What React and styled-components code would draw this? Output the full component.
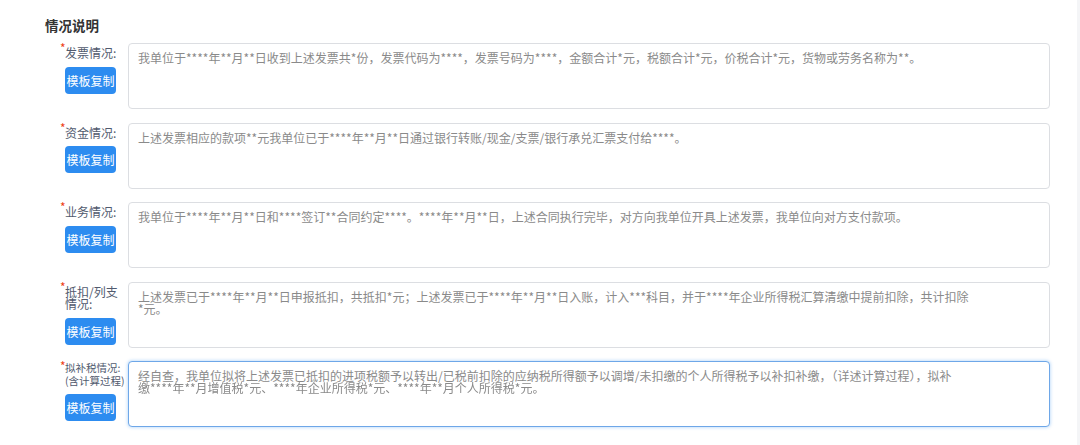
import React from 'react';
import styled, { createGlobalStyle, css } from 'styled-components';

const GlobalStyle = createGlobalStyle`
  html, body {
    margin: 0;
    padding: 0;
    background: #f4f5f7;
    font-family: "Noto Sans CJK SC", "Noto Sans", sans-serif;
  }
`;

const rows = [
  {
    label: ['发票情况:'],
    text:
      '我单位于****年**月**日收到上述发票共*份，发票代码为****，发票号码为****，金额合计*元，税额合计*元，价税合计*元，货物或劳务名称为**。'
  },
  {
    label: ['资金情况:'],
    text: '上述发票相应的款项**元我单位已于****年**月**日通过银行转账/现金/支票/银行承兑汇票支付给****。'
  },
  {
    label: ['业务情况:'],
    text:
      '我单位于****年**月**日和****签订**合同约定****。****年**月**日，上述合同执行完毕，对方向我单位开具上述发票，我单位向对方支付款项。'
  },
  {
    label: ['抵扣/列支', '情况:'],
    text:
      '上述发票已于****年**月**日申报抵扣，共抵扣*元；上述发票已于****年**月**日入账，计入***科目，并于****年企业所得税汇算清缴中提前扣除，共计扣除\n*元。'
  },
  {
    label: ['拟补税情况:', '(含计算过程)'],
    small: true,
    focused: true,
    text:
      '经自查，我单位拟将上述发票已抵扣的进项税额予以转出/已税前扣除的应纳税所得额予以调增/未扣缴的个人所得税予以补扣补缴，（详述计算过程），拟补\n缴****年**月增值税*元、****年企业所得税*元、****年**月个人所得税*元。'
  }
];

export default function App() {
  return (
    <>
      <GlobalStyle />
      <Panel>
        <Title>情况说明</Title>
        <Form>
          {rows.map((row, i) => (
            <Row key={i}>
              <Side>
                <Label small={row.small}>
                  <Star>*</Star>
                  {row.label.map((line, j) => (
                    <Line key={j}>{line}</Line>
                  ))}
                </Label>
                <CopyButton type='button'>模板复制</CopyButton>
              </Side>
              <Area
                defaultValue={row.text}
                focused={row.focused}
                autoFocus={row.focused}
                onFocus={e => e.target.setSelectionRange(0, 0)}
              />
            </Row>
          ))}
        </Form>
      </Panel>
    </>
  );
}

const Panel = styled.div`
  width: 1077px;
  height: 445px;
  box-sizing: border-box;
  background: #fff;
  padding: 16px 27px 0 45px;
  overflow: hidden;
`;

const Title = styled.h3`
  margin: 0;
  font-size: 13.5px;
  line-height: 18px;
  font-weight: 700;
  color: #333;
`;

const Form = styled.div`
  display: flex;
  flex-direction: column;
  gap: 13.5px;
  margin-top: 9px;
`;

const Row = styled.div`
  display: flex;
  align-items: flex-start;
`;

const Side = styled.div`
  width: 63px;
  padding-left: 20px;
  flex-shrink: 0;
  display: flex;
  flex-direction: column;
  align-items: flex-start;
`;

const Label = styled.div`
  position: relative;
  color: #515a6e;
  font-size: 12px;
  line-height: 12.5px;
  padding-top: 4px;
  margin-bottom: 7px;
  ${p =>
    p.small &&
    css`
      font-size: 10.5px;
      padding-top: 0;
      line-height: 13px;
    `}
`;

const Line = styled.div`
  white-space: nowrap;
`;

const Star = styled.span`
  position: absolute;
  left: -5px;
  top: 0;
  color: #ed4014;
  font-size: 12px;
  line-height: 10px;
`;

const CopyButton = styled.button`
  width: 51px;
  height: 27px;
  padding: 0;
  border: none;
  border-radius: 4px;
  background: #2d8cf0;
  color: #fff;
  font-family: inherit;
  font-size: 12px;
  cursor: pointer;
`;

const Area = styled.textarea`
  flex: 1;
  height: 66px;
  box-sizing: border-box;
  margin: 0;
  padding: 8px 40px 0 9px;
  border: 1px solid #dcdee2;
  border-radius: 4px;
  resize: none;
  outline: none;
  font-family: inherit;
  font-size: 12px;
  line-height: 12px;
  color: #8a8a8a;
  background: #fff;
  overflow: hidden;
  ${p =>
    p.focused &&
    css`
      border-color: #6ea7e8;
      box-shadow: 0 0 3px 1px rgba(45, 140, 240, 0.25);
    `}
`;
